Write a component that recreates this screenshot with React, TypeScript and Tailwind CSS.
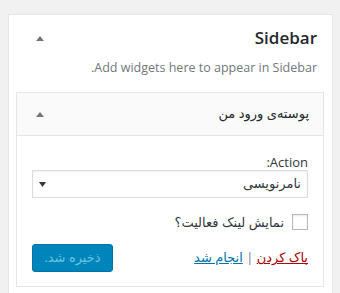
import React from "react";

const Tri = () => (
  <svg width="8" height="5" viewBox="0 0 8 5" className="block">
    <path d="M0 5 L4 0 L8 5 Z" fill="#72777c" />
  </svg>
);

export default function App() {
  return (
    <div
      className="min-h-[293px] w-[340px] bg-[#f1f1f1] pt-[14px] pl-[8px]"
      style={{ fontFamily: '"Open Sans", "DejaVu Sans", sans-serif' }}
    >
      <div dir="rtl" className="w-[325px] border border-[#e5e5e5] bg-white pb-[12px]">
        <div className="flex items-center justify-between pt-[11px] pr-[15px] pl-[27px]">
          <h2 className="text-[17px] font-semibold leading-[24px] text-[#23282d]">Sidebar</h2>
          <Tri />
        </div>
        <p className="mt-[8px] pr-[15px] text-[12.5px] leading-[20px] text-[#72777c]">
          Add widgets here to appear in Sidebar.
        </p>
        <div className="mt-[14px] mr-[8px] ml-[7px] border border-[#e5e5e5] bg-white">
          <div className="flex h-[43px] items-center justify-between border-b border-[#e5e5e5] bg-[#fafafa] pr-[14px] pl-[19px]">
            <span className="text-[13px] font-normal text-[#23282d]">پوسته‌ی ورود من</span>
            <Tri />
          </div>
          <div className="px-[15px] pt-[18px] pb-[14px]">
            <div className="text-[13px] leading-[16px] text-[#32373c]">Action:</div>
            <div className="flex h-[28px] items-center justify-between border border-[#dddddd] bg-white pr-[6px] pl-[6px] shadow-[inset_0_1px_2px_rgba(0,0,0,0.07)]">
              <span className="text-[13px] text-[#32373c]">نامرنویسی</span>
              <svg width="7" height="5" viewBox="0 0 7 5" className="block">
                <path d="M0 0 L7 0 L3.5 5 Z" fill="#32373c" />
              </svg>
            </div>
            <div className="mt-[16px] flex items-center gap-[8px]">
              <span className="block h-[16px] w-[16px] border border-[#b4b9be] bg-white shadow-[inset_0_1px_2px_rgba(0,0,0,0.1)]" />
              <span className="text-[13px] leading-[16px] text-[#32373c]">نمایش لینک فعالیت؟</span>
            </div>
            <div className="mt-[14px] flex items-center justify-between">
              <div className="text-[13px] text-[#32373c]">
                <span className="text-[#aa0000] underline">پاک کردن</span>
                <span className="text-[#72777c]"> | </span>
                <span className="text-[#0073aa] underline">انجام شد</span>
              </div>
              <div className="flex h-[28px] w-[81px] items-center justify-center rounded-[3px] border border-[#0073aa] bg-[#0085ba] text-[13px] text-[#66c6e4]">
                ذخیره شد.
              </div>
            </div>
          </div>
        </div>
      </div>
    </div>
  );
}
